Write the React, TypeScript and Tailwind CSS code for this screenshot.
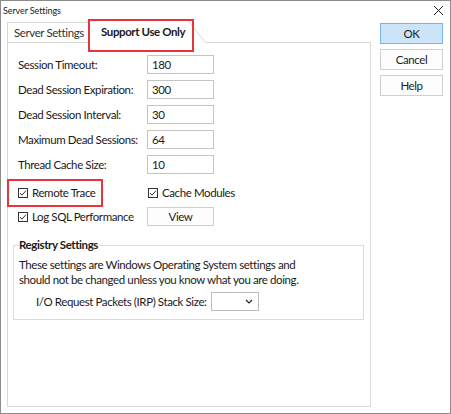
import React from 'react';

const FONT = 'font-["Lato","Segoe_UI",sans-serif]';

function CheckBox({ label }: { label: string }) {
  return (
    <label className="flex items-center gap-[4px] h-[19px] whitespace-nowrap">
      <svg width="10" height="10" viewBox="0 0 10 10" className="shrink-0">
        <rect x="0.5" y="0.5" width="9" height="9" fill="#fff" stroke="#333" />
        <path d="M2 5 L4 7.2 L8 2.6" fill="none" stroke="#333" strokeWidth="1" />
      </svg>
      <span>{label}</span>
    </label>
  );
}

function Field({ label, value }: { label: string; value: string }) {
  return (
    <div className="flex items-center h-[19px]">
      <span className="w-[129px] shrink-0 whitespace-nowrap">{label}</span>
      <div className="w-[67px] h-[19px] border border-[#c4c4c4] bg-white flex items-center pl-[4px]">
        {value}
      </div>
    </div>
  );
}

function DialogButton({ label, primary }: { label: string; primary?: boolean }) {
  return (
    <button
      className={`w-[63px] h-[21px] border flex items-center justify-center ${
        primary ? 'bg-[#cce4f7] border-[#7ab3e6]' : 'bg-[#fdfdfd] border-[#cfcfcf]'
      }`}
    >
      {label}
    </button>
  );
}

export default function App() {
  return (
    <div
      className={`${FONT} relative w-[451px] h-[414px] bg-white border border-[#8c8c8c] flex flex-col text-[11.5px] tracking-[-0.4px] text-[#1a1a1a] leading-none`}
    >
      {/* Title bar */}
      <div className="h-[19px] flex items-center justify-between pl-[2px] pr-[6px] shrink-0">
        <span className="text-[9px] tracking-[-0.1px]">Server Settings</span>
        <svg width="11" height="11" viewBox="0 0 11 11">
          <path d="M1 1 L10 10 M10 1 L1 10" stroke="#222" strokeWidth="1" />
        </svg>
      </div>

      <div className="flex pl-[6px]">
        {/* Tabs + panel */}
        <div className="w-[364px] flex flex-col">
          <div className="h-[23px] flex items-end">
            <div className="w-[81px] h-[21px] border-t border-l border-b border-[#d9d9d9] flex items-center pl-[6px] text-[#333] whitespace-nowrap">
              Server Settings
            </div>
            <div className="w-[99px] h-[23px] border-t border-l border-[#d9d9d9] flex items-center pl-[12px] font-bold whitespace-nowrap">
              Support Use Only
            </div>
            <svg width="19" height="23" viewBox="0 0 19 23" className="shrink-0">
              <path d="M0 0.5 L1 0.5 L18.5 22.5 L19 22.5" fill="none" stroke="#d9d9d9" />
            </svg>
            <div className="flex-1 h-[1px] bg-[#d9d9d9]" />
          </div>

          <div className="h-[364px] border-l border-r border-b border-[#d9d9d9] pl-[10px] pt-[12px] flex flex-col">
            <div className="flex flex-col gap-[6px]">
              <Field label="Session Timeout:" value="180" />
              <Field label="Dead Session Expiration:" value="300" />
              <Field label="Dead Session Interval:" value="30" />
              <Field label="Maximum Dead Sessions:" value="64" />
              <Field label="Thread Cache Size:" value="10" />
            </div>

            <div className="mt-[9px] flex items-center h-[19px]">
              <div className="w-[130px] shrink-0">
                <CheckBox label="Remote Trace" />
              </div>
              <CheckBox label="Cache Modules" />
            </div>
            <div className="mt-[5px] flex items-center h-[19px]">
              <div className="w-[129px] shrink-0">
                <CheckBox label="Log SQL Performance" />
              </div>
              <button className="w-[67px] h-[19px] border border-[#cfcfcf] bg-[#fdfdfd] flex items-center justify-center">
                View
              </button>
            </div>

            <div className="relative mt-[19px] -ml-[5px] w-[351px] border border-[#dcdcdc] pl-[5px] pt-[11px] pb-[8px]">
              <span className="absolute -top-[7px] left-[5px] bg-white pr-[2px] font-bold">Registry Settings</span>
              <p className="leading-[15px] whitespace-nowrap">
                These settings are Windows Operating System settings and
                <br />
                should not be changed unless you know what you are doing.
              </p>
              <div className="mt-[5px] flex items-center pl-[17px]">
                <span className="w-[175px] shrink-0 whitespace-nowrap">I/O Request Packets (IRP) Stack Size:</span>
                <div className="w-[48px] h-[19px] border border-[#bdbdbd] bg-white flex items-center justify-end pr-[5px]">
                  <svg width="8" height="5" viewBox="0 0 8 5">
                    <path d="M1 1 L4 4 L7 1" fill="none" stroke="#222" strokeWidth="1.2" />
                  </svg>
                </div>
              </div>
            </div>
          </div>
        </div>

        {/* Dialog buttons */}
        <div className="ml-[9px] mt-[3px] flex flex-col gap-[5px]">
          <DialogButton label="OK" primary />
          <DialogButton label="Cancel" />
          <DialogButton label="Help" />
        </div>
      </div>

      {/* Annotation highlights */}
      <div className="absolute left-[87px] top-[18px] w-[106px] h-[33px] border-2 border-[#e8353b]" />
      <div className="absolute left-[6px] top-[178px] w-[96px] h-[28px] border-2 border-[#e8353b]" />
    </div>
  );
}
